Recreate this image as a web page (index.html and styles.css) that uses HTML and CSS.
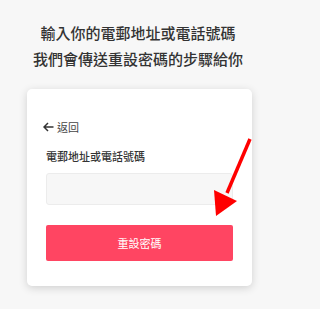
FILE: index.html
```html
<!DOCTYPE html>
<html lang="zh-Hant">
<head>
<meta charset="utf-8">
<link rel="stylesheet" href="styles.css">
</head>
<body>
<div class="page">
  <div class="title">
    <div>輸入你的電郵地址或電話號碼</div>
    <div>我們會傳送重設密碼的步驟給你</div>
  </div>
  <div class="card">
    <div class="back">
      <svg class="back-icon" width="11" height="10" viewBox="0 0 11 10"><path d="M10.5 5H1.2M5 1L1 5l4 4" fill="none" stroke="#333" stroke-width="1.5"/></svg>
      <span>返回</span>
    </div>
    <div class="label">電郵地址或電話號碼</div>
    <div class="input"></div>
    <div class="button">重設密碼</div>
  </div>
</div>
<svg class="annot" width="276" height="309" viewBox="0 0 276 309">
  <line x1="250" y1="139" x2="227" y2="193" stroke="#ff0000" stroke-width="3.5"/>
  <polygon points="214,190 237,201 216,216" fill="#ff0000"/>
</svg>
</body>
</html>
```

FILE: styles.css
```css
html, body {
  margin: 0;
  padding: 0;
  background: #f7f7f7;
  font-family: "Noto Sans CJK TC", "Noto Sans", sans-serif;
  color: #333;
}
.page {
  width: 276px;
  height: 309px;
  overflow: hidden;
}
.title {
  padding-top: 20px;
  text-align: center;
  font-size: 15px;
  font-weight: 500;
  line-height: 26px;
  color: #333;
}
.card {
  margin: 17px 0 0 27px;
  width: 225px;
  box-sizing: border-box;
  background: #fff;
  border-radius: 5px;
  box-shadow: 0 2px 8px rgba(0, 0, 0, 0.16);
  padding: 30px 19px 25px;
  display: flex;
  flex-direction: column;
}
.back {
  display: flex;
  align-items: center;
  gap: 3px;
  height: 16px;
  font-size: 11px;
  line-height: 16px;
  color: #444;
  margin-left: -3px;
}
.back-icon {
  display: block;
}
.label {
  margin-top: 13px;
  font-size: 11px;
  font-weight: 500;
  line-height: 16px;
  color: #333;
}
.input {
  margin-top: 9px;
  height: 32px;
  box-sizing: border-box;
  background: #f7f7f7;
  border: 1.5px solid #ececec;
  border-radius: 3px;
}
.button {
  margin-top: 20px;
  height: 36px;
  background: #ff4562;
  border-radius: 2px;
  color: #fff;
  font-size: 11px;
  display: flex;
  align-items: center;
  justify-content: center;
}
.annot {
  position: absolute;
  left: 0;
  top: 0;
  pointer-events: none;
}
```
